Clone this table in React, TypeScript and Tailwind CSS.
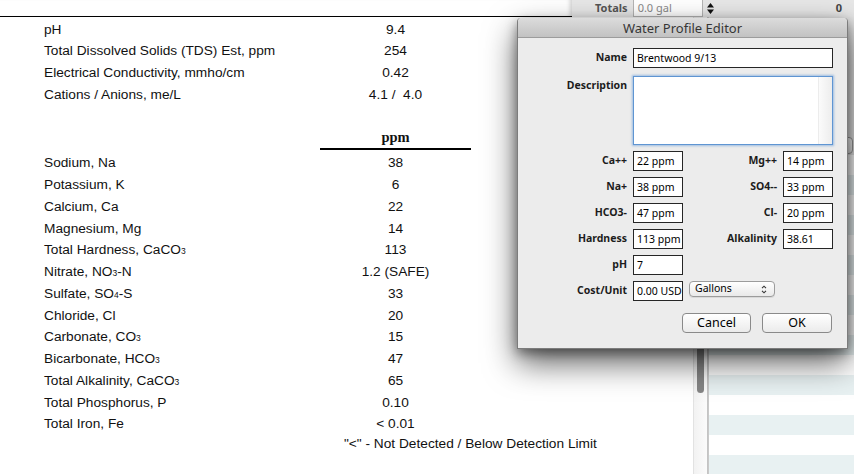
import type { ReactNode } from "react";

// tiny subscript used in the lab report (CaCO3, NO3 ...)
function Sub({ children }: { children: ReactNode }) {
  return <span className="text-[8.5px]">{children}</span>;
}

const summaryRows: [ReactNode, string][] = [
  ["pH", "9.4"],
  ["Total Dissolved Solids (TDS) Est, ppm", "254"],
  ["Electrical Conductivity, mmho/cm", "0.42"],
  ["Cations / Anions, me/L", "4.1 /  4.0"],
];

const ionRows: [ReactNode, string][] = [
  ["Sodium, Na", "38"],
  ["Potassium, K", "6"],
  ["Calcium, Ca", "22"],
  ["Magnesium, Mg", "14"],
  [<>Total Hardness, CaCO<Sub>3</Sub></>, "113"],
  [<>Nitrate, NO<Sub>3</Sub>-N</>, "1.2 (SAFE)"],
  [<>Sulfate, SO<Sub>4</Sub>-S</>, "33"],
  ["Chloride, Cl", "20"],
  [<>Carbonate, CO<Sub>3</Sub></>, "15"],
  [<>Bicarbonate, HCO<Sub>3</Sub></>, "47"],
  [<>Total Alkalinity, CaCO<Sub>3</Sub></>, "65"],
  ["Total Phosphorus, P", "0.10"],
  ["Total Iron, Fe", "< 0.01"],
];

const ionPairs = [
  ["Ca++", "22 ppm", "Mg++", "14 ppm"],
  ["Na+", "38 ppm", "SO4--", "33 ppm"],
  ["HCO3-", "47 ppm", "Cl-", "20 ppm"],
  ["Hardness", "113 ppm", "Alkalinity", "38.61"],
];

function ReportRow({ label, value }: { label: ReactNode; value: string }) {
  return (
    <div className="flex h-[21.75px] items-center">
      <div className="w-[276px]">{label}</div>
      <div className="w-[151px] whitespace-pre text-center">{value}</div>
    </div>
  );
}

function Field({ value, w = "w-[50px]" }: { value: string; w?: string }) {
  return (
    <div
      className={`${w} ml-[6px] h-[20px] overflow-hidden whitespace-nowrap border border-[#262626] bg-white px-[3px] text-[10.5px] leading-[18px] text-black`}
    >
      {value}
    </div>
  );
}

function Label({ children, w = "w-[109px]" }: { children: ReactNode; w?: string }) {
  return (
    <div className={`${w} shrink-0 text-right text-[10.5px] font-bold text-[#1c1c1c]`}>
      {children}
    </div>
  );
}

function WaterProfileEditor() {
  return (
    <div className="absolute left-[517px] top-[18px] flex h-[331px] w-[331px] flex-col rounded-t-[4px] border border-t-0 border-[#7c7c7c] bg-[#ececec] font-['Noto_Sans',sans-serif] shadow-[0_14px_32px_rgba(0,0,0,0.62),0_4px_12px_rgba(0,0,0,0.4)]">
      <div className="h-[20px] rounded-t-[4px] border-b border-[#9c9c9c] bg-gradient-to-b from-[#dcdcdc] to-[#c2c2c2] text-center text-[13px] leading-[20px] text-[#363636]">
        Water Profile Editor
      </div>

      <div className="flex flex-col pt-[10px]">
        <div className="flex items-center">
          <Label>Name</Label>
          <Field value="Brentwood 9/13" w="w-[200px]" />
        </div>

        <div className="mt-[8px] flex items-start">
          <Label>
            <div className="pt-[2px]">Description</div>
          </Label>
          <div className="ml-[6px] flex h-[69px] w-[200px] border border-[#5f95d2] bg-white shadow-[0_0_2px_1px_rgba(95,150,215,0.55)]">
            <div className="flex-1" />
            <div className="w-[14px] border-l border-[#ececec] bg-gradient-to-r from-[#fbfbfb] to-[#ededed]" />
          </div>
        </div>

        <div className="mt-[6px] flex flex-col gap-[6px]">
          {ionPairs.map(([l1, v1, l2, v2]) => (
            <div key={l1} className="flex items-center">
              <Label>{l1}</Label>
              <Field value={v1} />
              <Label w="w-[94px]">{l2}</Label>
              <Field value={v2} />
            </div>
          ))}
          <div className="flex items-center">
            <Label>pH</Label>
            <Field value="7" />
          </div>
          <div className="flex items-start">
            <div className="flex h-[20px] items-center">
              <Label>Cost/Unit</Label>
            </div>
            <Field value="0.00 USD" />
            <div className="ml-[6px] flex h-[16px] w-[86px] items-center justify-between rounded-[4px] border border-[#9c9c9c] bg-gradient-to-b from-white to-[#e9e9e9] pl-[5px] pr-[7px] text-[10.5px] text-black shadow-[0_1px_0_rgba(0,0,0,0.08)]">
              <span>Gallons</span>
              <svg width="6" height="9" viewBox="0 0 6 9">
                <path d="M1 3.2 3 1.2 5 3.2M1 5.8 3 7.8 5 5.8" fill="none" stroke="#333" strokeWidth="1.1" />
              </svg>
            </div>
          </div>
        </div>

        <div className="mt-[12px] flex justify-end gap-[11px] pr-[15px]">
          <button className="h-[20px] w-[69px] rounded-[4px] border border-[#8a8a8a] bg-gradient-to-b from-white to-[#ebebeb] text-[12.5px] leading-[18px] text-black">
            Cancel
          </button>
          <button className="h-[20px] w-[70px] rounded-[4px] border border-[#8a8a8a] bg-gradient-to-b from-white to-[#ebebeb] text-[12.5px] leading-[18px] text-black">
            OK
          </button>
        </div>
      </div>
    </div>
  );
}

export default function App() {
  return (
    <div className="relative flex h-[474px] w-[854px] flex-col overflow-hidden bg-white font-['Liberation_Sans',Arial,sans-serif] text-[13.7px] text-[#111]">
      {/* top strip: end of previous page + totals toolbar */}
      <div className="flex h-[17px] shrink-0">
        <div className="w-[572px] border-b border-black bg-white shadow-[inset_-5px_0_4px_-3px_rgba(0,0,0,0.18)]" />
        <div className="flex flex-1 items-center bg-[#e7e7e7] font-['Noto_Sans',sans-serif] text-[11px]">
          <span className="ml-[23px] font-bold text-[#555]">Totals</span>
          <div className="ml-[5px] h-[17px] w-[70px] border-x border-b border-[#b4b4b4] bg-white pl-[4px] leading-[15px] text-[#888]">
            0.0 gal
          </div>
          <svg className="ml-[4px]" width="7" height="11" viewBox="0 0 7 11">
            <path d="M3.5 0 7 4.5H0ZM3.5 11 0 6.5H7Z" fill="#111" />
          </svg>
          <span className="ml-auto mr-[12px] font-bold text-[#444]">0</span>
        </div>
      </div>

      <div className="flex min-h-0 flex-1">
        {/* report page */}
        <div className="w-[693px] shrink-0 bg-white pl-[44px] pt-[2px]">
          {summaryRows.map(([l, v], i) => (
            <ReportRow key={i} label={l} value={v} />
          ))}
          <div className="mb-[3px] ml-[276px] mt-[22px] flex h-[21.75px] w-[151px] items-center justify-center border-b-2 border-black font-['Liberation_Serif',serif] text-[14.5px] font-bold">
            ppm
          </div>
          {ionRows.map(([l, v], i) => (
            <ReportRow key={i} label={l} value={v} />
          ))}
          <div className="ml-[300px] flex h-[18px] items-center whitespace-nowrap">
            "&lt;" - Not Detected / Below Detection Limit
          </div>
        </div>

        {/* scroll bar */}
        <div className="w-[15px] shrink-0 border-x border-l-[#e2e2e2] border-r-[#c4c4c4] bg-gradient-to-r from-[#f2f2f2] to-[#fbfbfb] pl-[3px]">
          <div className="mt-[163px] h-[213px] w-[7px] rounded-full bg-[#858585]" />
        </div>

        {/* list panel */}
        <div className="flex flex-1 flex-col overflow-hidden border-l border-[#c9c9c9]">
          <div className="flex h-[138px] shrink-0 items-end justify-end bg-[#e6e6e6] pb-[1px] pr-[1px]">
            <div className="h-[17px] w-[60px] rounded-[4px] border border-[#9a9a9a] bg-gradient-to-b from-white to-[#e9e9e9]" />
          </div>
          {Array.from({ length: 16 }).map((_, i) => (
            <div
              key={i}
              className={i % 2 === 1 ? "h-[20px] shrink-0 bg-[#e8f1f2]" : "h-[20px] shrink-0 bg-white"}
            />
          ))}
        </div>
      </div>

      <WaterProfileEditor />
    </div>
  );
}
